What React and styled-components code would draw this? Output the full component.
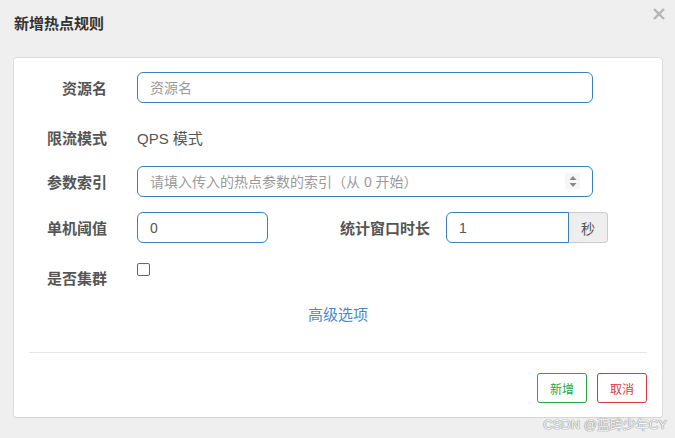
import React from 'react';
import styled, { createGlobalStyle } from 'styled-components';

const GlobalStyle = createGlobalStyle`
  html, body {
    margin: 0;
    padding: 0;
    background: #efefef;
  }
  body {
    font-family: "Liberation Sans", "Noto Sans CJK SC", sans-serif;
    color: #555;
  }
`;

const Page = styled.div`
  position: relative;
  width: 675px;
  height: 438px;
  background: #efefef;
  overflow: hidden;
`;

const Header = styled.div`
  display: flex;
  justify-content: space-between;
  align-items: flex-start;
  height: 57px;
  padding: 0 10px 0 14px;
  box-sizing: border-box;
`;

const Title = styled.h4`
  margin: 13px 0 0;
  font-size: 15px;
  line-height: 20px;
  font-weight: bold;
  color: #333;
  font-family: "Noto Sans CJK SC", sans-serif;
`;

const Close = styled.button`
  margin-top: 8px;
  padding: 0;
  border: 0;
  background: none;
  width: 12px;
  height: 12px;
  display: flex;
  cursor: pointer;
`;

const Card = styled.div`
  margin: 0 12px 0 13px;
  height: 361px;
  box-sizing: border-box;
  background: #fff;
  border: 1px solid #ddd;
  border-bottom-color: #d4d4d4;
  border-radius: 4px;
  padding: 14px 15px 0;
`;

const Row = styled.div`
  display: flex;
  align-items: ${(p) => (p.$top ? 'flex-start' : 'center')};
  height: 31px;
  margin-top: ${(p) => p.$mt || 0}px;
`;

const Label = styled.label`
  width: ${(p) => p.$w || 78}px;
  flex: none;
  text-align: right;
  font-size: 15px;
  line-height: 31px;
  font-weight: bold;
  color: #555;
  font-family: "Noto Sans CJK SC", sans-serif;
  margin-right: ${(p) => p.$gap || 30}px;
`;

const Input = styled.input`
  box-sizing: border-box;
  width: ${(p) => p.$w}px;
  height: 31px;
  padding: 0 12px;
  border: 1px solid #3b7dbd;
  border-radius: ${(p) => (p.$addon ? '6px 0 0 6px' : '6px')};
  font-size: 14px;
  color: #555;
  font-family: "Liberation Sans", "Noto Sans CJK SC", sans-serif;
  outline: none;
  background: #fff;

  &::placeholder {
    color: #9a9a9a;
  }
`;

const Static = styled.span`
  font-size: 15px;
  color: #555;
  font-family: "Liberation Sans", "Noto Sans CJK SC", sans-serif;
`;

const SelectWrap = styled.div`
  position: relative;
  display: flex;
`;

const Spinner = styled.span`
  position: absolute;
  right: 13px;
  top: 7px;
  width: 15px;
  height: 16px;
  background: #f6f6f6;
  display: flex;
  align-items: center;
  justify-content: center;
`;

const Addon = styled.span`
  box-sizing: border-box;
  width: 39px;
  height: 31px;
  display: flex;
  align-items: center;
  justify-content: center;
  background: #eee;
  border: 1px solid #ccc;
  border-left: 0;
  border-radius: 0 4px 4px 0;
  font-size: 14px;
  color: #555;
  font-family: "Noto Sans CJK SC", sans-serif;
`;

const Check = styled.span`
  box-sizing: border-box;
  width: 13px;
  height: 13px;
  margin-top: 1px;
  border: 1px solid #666;
  border-radius: 2px;
  background: #fff;
`;

const LinkRow = styled.div`
  display: flex;
  justify-content: center;
  align-items: center;
  height: 30px;
  margin-top: 5px;
`;

const Link = styled.a`
  font-size: 15px;
  color: #4a87c8;
  text-decoration: none;
  font-family: "Noto Sans CJK SC", sans-serif;
`;

const Divider = styled.hr`
  margin: 24px 0 0;
  border: 0;
  border-top: 1px solid #e5e5e5;
`;

const Footer = styled.div`
  display: flex;
  justify-content: flex-end;
  gap: 10px;
  margin-top: 20px;
`;

const Btn = styled.button`
  width: 50px;
  height: 30px;
  padding: 0;
  background: #fff;
  border: 1px solid ${(p) => p.$color};
  color: ${(p) => p.$color};
  border-radius: 3px;
  font-size: 12px;
  font-family: "Noto Sans CJK SC", sans-serif;
`;

const Watermark = styled.span`
  position: absolute;
  right: 8px;
  bottom: 5px;
  font-size: 13px;
  color: #f4f4f4;
  font-family: "Liberation Sans", "Noto Sans CJK SC", sans-serif;
  text-shadow: 0 0 1px #999, 0 0 1px #999, 0 0 1px #999;
`;

export default function App() {
  return (
    <Page>
      <GlobalStyle />
      <Header>
        <Title>新增热点规则</Title>
        <Close aria-label="关闭">
          <svg width="12" height="12" viewBox="0 0 12 12">
            <path d="M1 1L11 11M11 1L1 11" stroke="#b5b5b5" strokeWidth="2.4" />
          </svg>
        </Close>
      </Header>
      <Card>
        <Row>
          <Label>资源名</Label>
          <Input $w={456} placeholder="资源名" />
        </Row>
        <Row $mt={19}>
          <Label>限流模式</Label>
          <Static>QPS 模式</Static>
        </Row>
        <Row $mt={13}>
          <Label>参数索引</Label>
          <SelectWrap>
            <Input $w={456} placeholder="请填入传入的热点参数的索引（从 0 开始）" />
            <Spinner>
              <svg width="8" height="11" viewBox="0 0 8 11">
                <path d="M4 0L7.5 4H0.5Z M4 11L0.5 7H7.5Z" fill="#888" />
              </svg>
            </Spinner>
          </SelectWrap>
        </Row>
        <Row $mt={15}>
          <Label>单机阈值</Label>
          <Input $w={131} defaultValue="0" />
          <Label $w={162} $gap={16}>统计窗口时长</Label>
          <Input $w={123} $addon defaultValue="1" />
          <Addon>秒</Addon>
        </Row>
        <Row $mt={19} $top>
          <Label>是否集群</Label>
          <Check />
        </Row>
        <LinkRow>
          <Link href="#">高级选项</Link>
        </LinkRow>
        <Divider />
        <Footer>
          <Btn $color="#28a745">新增</Btn>
          <Btn $color="#dc3545">取消</Btn>
        </Footer>
      </Card>
      <Watermark>CSDN @蓝眸少年CY</Watermark>
    </Page>
  );
}
